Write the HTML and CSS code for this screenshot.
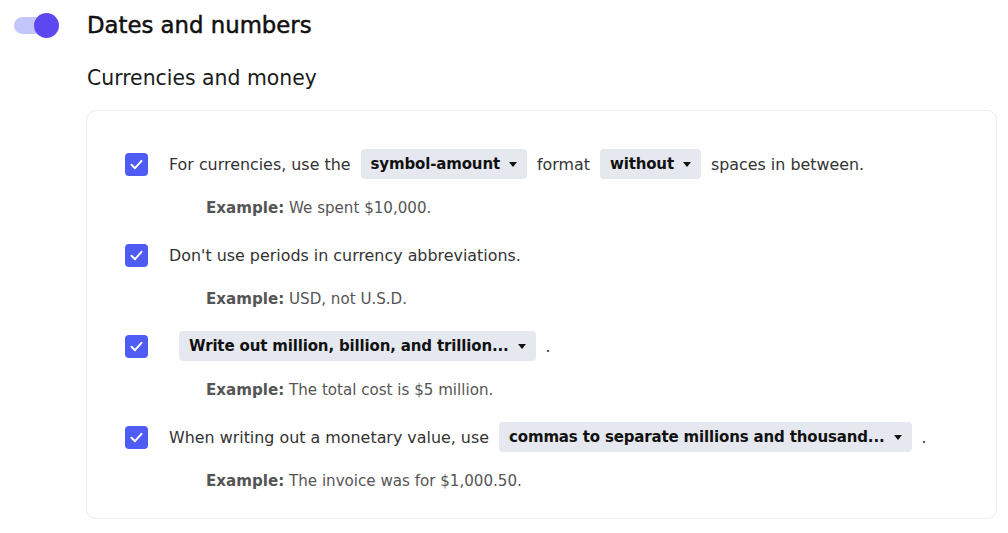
FILE: index.html
```html
<!DOCTYPE html>
<html>
<head>
<meta charset="utf-8">
<link rel="stylesheet" href="styles.css">
</head>
<body>
<div class="page">
  <div class="header">
    <div class="toggle"><span class="track"></span><span class="knob"></span></div>
    <h1 class="title">Dates and numbers</h1>
  </div>
  <h2 class="subtitle">Currencies and money</h2>
  <div class="card">
    <div class="item">
      <div class="row">
        <span class="check"><svg viewBox="0 0 23 23" width="23" height="23"><polyline points="6.5,11.8 10,15.2 16.5,7.8" fill="none" stroke="#fff" stroke-width="2" stroke-linecap="round" stroke-linejoin="round"/></svg></span>
        <span class="text">For currencies, use the</span>
        <span class="dd">symbol-amount<span class="caret"></span></span>
        <span class="text">format</span>
        <span class="dd">without<span class="caret"></span></span>
        <span class="text">spaces in between.</span>
      </div>
      <div class="example"><b>Example:</b> We spent $10,000.</div>
    </div>
    <div class="item">
      <div class="row">
        <span class="check"><svg viewBox="0 0 23 23" width="23" height="23"><polyline points="6.5,11.8 10,15.2 16.5,7.8" fill="none" stroke="#fff" stroke-width="2" stroke-linecap="round" stroke-linejoin="round"/></svg></span>
        <span class="text">Don't use periods in currency abbreviations.</span>
      </div>
      <div class="example"><b>Example:</b> USD, not U.S.D.</div>
    </div>
    <div class="item">
      <div class="row">
        <span class="check"><svg viewBox="0 0 23 23" width="23" height="23"><polyline points="6.5,11.8 10,15.2 16.5,7.8" fill="none" stroke="#fff" stroke-width="2" stroke-linecap="round" stroke-linejoin="round"/></svg></span>
        <span class="text"></span>
        <span class="dd">Write out million, billion, and trillion...<span class="caret"></span></span>
        <span class="text">.</span>
      </div>
      <div class="example"><b>Example:</b> The total cost is $5 million.</div>
    </div>
    <div class="item">
      <div class="row">
        <span class="check"><svg viewBox="0 0 23 23" width="23" height="23"><polyline points="6.5,11.8 10,15.2 16.5,7.8" fill="none" stroke="#fff" stroke-width="2" stroke-linecap="round" stroke-linejoin="round"/></svg></span>
        <span class="text">When writing out a monetary value, use</span>
        <span class="dd">commas to separate millions and thousand...<span class="caret"></span></span>
        <span class="text">.</span>
      </div>
      <div class="example"><b>Example:</b> The invoice was for $1,000.50.</div>
    </div>
  </div>
</div>
</body>
</html>
```

FILE: styles.css
```css
html, body {
  margin: 0;
  padding: 0;
  background: #ffffff;
}
body {
  font-family: "DejaVu Sans", "Liberation Sans", sans-serif;
  color: #333333;
}
.page {
  padding: 0 11px 0 14px;
}
.header {
  display: flex;
  align-items: center;
  height: 50px;
}
.toggle {
  position: relative;
  width: 45px;
  height: 25px;
  flex: none;
}
.track {
  position: absolute;
  left: 0;
  top: 4px;
  width: 40px;
  height: 17px;
  border-radius: 9px;
  background: #c2c6fb;
}
.knob {
  position: absolute;
  left: 20px;
  top: 0;
  width: 25px;
  height: 25px;
  border-radius: 50%;
  background: #5d47f1;
}
.title {
  margin: 0 0 0 28px;
  font-size: 22.8px;
  font-weight: 400;
  -webkit-text-stroke: 0.5px #111111;
  color: #111111;
}
.subtitle {
  margin: 4px 0 0 73px;
  height: 56px;
  line-height: 48px;
  font-size: 20.4px;
  font-weight: 400;
  color: #1a1a1a;
}
.card {
  margin-left: 72px;
  border: 1px solid #ececec;
  border-radius: 10px;
  padding: 38px 38px 27px 38px;
  display: flex;
  flex-direction: column;
  gap: 22px;
}
.row {
  display: flex;
  align-items: center;
  height: 30px;
}
.check {
  width: 23px;
  height: 23px;
  border-radius: 4px;
  background: #4f5cf4;
  flex: none;
  display: flex;
  margin-right: 21px;
}
.text {
  font-size: 15.9px;
  color: #333333;
  white-space: nowrap;
}
.dd {
  display: flex;
  align-items: center;
  height: 30px;
  padding: 0 10px;
  margin: 0 10px;
  background: #e6e8ef;
  border-radius: 4px;
  font-size: 15px;
  letter-spacing: -0.15px;
  font-weight: 700;
  color: #111111;
  white-space: nowrap;
}
.caret {
  width: 0;
  height: 0;
  border-left: 4.5px solid transparent;
  border-right: 4.5px solid transparent;
  border-top: 5px solid #111111;
  margin-left: 9px;
}
.example {
  margin: 19px 0 0 81px;
  line-height: 20px;
  font-size: 15.1px;
  color: #555555;
}
.example b {
  font-weight: 700;
}
```
